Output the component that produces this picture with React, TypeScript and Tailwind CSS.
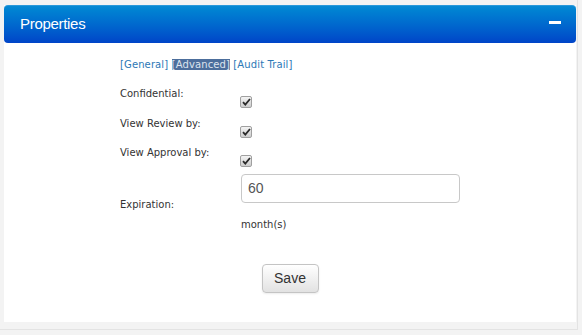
import React from "react";

const label = "text-[10px] leading-[12px] text-[#333]";

function Check() {
  return (
    <div className="w-[12px] h-[12px] rounded-[2px] border border-[#a0a0a0] bg-gradient-to-b from-[#f4f4f4] to-[#cdcdcd] flex items-center justify-center">
      <svg width="9" height="8" viewBox="0 0 9 8">
        <path d="M1 4.2 L3.3 6.6 L8 1" stroke="#2a2a2a" strokeWidth="1.8" fill="none" />
      </svg>
    </div>
  );
}

export default function App() {
  return (
    <div className="w-[582px] h-[335px] bg-[#f3f3f3]">
      <div className="w-[578px] h-[330px] border-r border-b border-[#e3e3e3] pl-[4px] pt-[5px]" style={{ fontFamily: '"DejaVu Sans", sans-serif' }}>
        <div className="w-[572px] h-[317px] bg-white flex flex-col">
          <div className="h-[38px] rounded-[4px] bg-gradient-to-b from-[#0789d3] to-[#0044c8] flex items-center justify-between pl-[16px] pr-[15px] border-t border-[#2a98da]">
            <span className="text-white text-[15px] tracking-[-0.3px]" style={{ fontFamily: '"Liberation Sans", Arial, sans-serif' }}>
              Properties
            </span>
            <span className="w-[12px] h-[3px] bg-white mb-[4px]"></span>
          </div>
          <div className="pl-[116px] pt-[16px] flex flex-col">
            <div className="text-[10px] leading-[12px] text-[#2c78b6] whitespace-pre tracking-[0.12px]">
              <span>[General]</span> <span className="bg-[#4c6e9c] text-[#dde4ee]">[Advanced]</span> <span>[Audit Trail]</span>
            </div>
            <div className="flex mt-[17px] h-[29.5px]">
              <div className={`${label} w-[120px]`}>Confidential:</div>
              <div className="mt-[8px]"><Check /></div>
            </div>
            <div className="flex h-[29.5px]">
              <div className={`${label} w-[120px]`}>View Review by:</div>
              <div className="mt-[8px]"><Check /></div>
            </div>
            <div className="flex h-[27px]">
              <div className={`${label} w-[120px]`}>View Approval by:</div>
              <div className="mt-[8px]"><Check /></div>
            </div>
            <div className="flex">
              <div className={`${label} w-[121px] mt-[25px]`}>Expiration:</div>
              <div className="flex flex-col">
                <div className="w-[219px] h-[29px] border border-[#c8c8c8] rounded-[4px] flex items-center pl-[6px] text-[14px] text-[#555]" style={{ fontFamily: '"Liberation Sans", Arial, sans-serif' }}>
                  60
                </div>
                <div className={`${label} mt-[16px]`}>month(s)</div>
              </div>
            </div>
          </div>
          <div className="flex justify-center mt-[33px]">
            <button className="w-[57px] h-[29px] rounded-[4px] border border-[#c4c4c4] bg-gradient-to-b from-white to-[#e2e2e2] text-[14px] text-[#333] shadow-[0_1px_2px_rgba(0,0,0,0.08)]" style={{ fontFamily: '"Liberation Sans", Arial, sans-serif' }}>
              Save
            </button>
          </div>
        </div>
      </div>
    </div>
  );
}
